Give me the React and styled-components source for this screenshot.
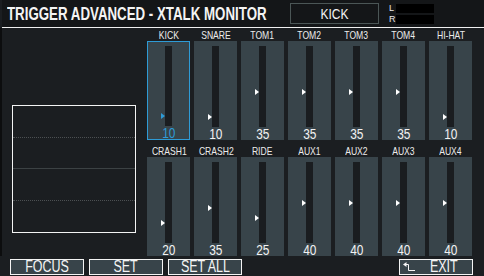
import styled, { createGlobalStyle, css } from "styled-components";

const GlobalStyle = createGlobalStyle`
	html, body {
		margin: 0;
		padding: 0;
		background: #1b1e21;
	}
	body {
		font-family: "Liberation Sans", Arial, sans-serif;
		color: #f2f2f2;
	}
`;

const pads = [
	[
		{ name: "KICK", value: 10, active: true },
		{ name: "SNARE", value: 10 },
		{ name: "TOM1", value: 35 },
		{ name: "TOM2", value: 35 },
		{ name: "TOM3", value: 35 },
		{ name: "TOM4", value: 35 },
		{ name: "HI-HAT", value: 10 },
	],
	[
		{ name: "CRASH1", value: 20 },
		{ name: "CRASH2", value: 35 },
		{ name: "RIDE", value: 25 },
		{ name: "AUX1", value: 40 },
		{ name: "AUX2", value: 40 },
		{ name: "AUX3", value: 40 },
		{ name: "AUX4", value: 40 },
	],
];

const BLUE = "#2e9bd6";

const Screen = styled.div`
	width: 484px;
	height: 276px;
	display: flex;
	flex-direction: column;
	background: #1b1e21;
	overflow: hidden;
`;

const Squeeze = styled.span`
	display: inline-block;
	white-space: nowrap;
	transform: scaleX(${(p) => p.$k || 0.78});
	transform-origin: ${(p) => p.$origin || "center"};
`;

const Header = styled.header`
	height: 27px;
	display: flex;
	align-items: center;
	background: #141618;
	border-bottom: 1px solid #f0f0f0;
	margin-left: 2px;
`;

const Title = styled.h1`
	width: 288px;
	margin: 0;
	padding-left: 5px;
	box-sizing: border-box;
	font-size: 19px;
	font-weight: bold;
	line-height: 27px;
	color: #f4f4f4;
`;

const PadName = styled.div`
	width: 89px;
	height: 21px;
	box-sizing: border-box;
	border: 1px solid #4b5656;
	display: flex;
	align-items: center;
	justify-content: center;
	font-size: 15px;
	color: #f4f4f4;
`;

const Meter = styled.div`
	margin-left: 10px;
	display: grid;
	grid-template-columns: 7px 38px;
	row-gap: 2px;
	align-items: center;
	font-size: 9px;
	line-height: 9px;
	color: #e8e8e8;
`;

const MeterBar = styled.div`
	height: 9px;
	background: #000;
`;

const Main = styled.main`
	flex: 1;
	display: flex;
	border-left: 2px solid #0c0d0e;
`;

const LeftPanel = styled.div`
	width: 145px;
	padding: 77px 0 0 10px;
	box-sizing: border-box;
`;

const Scope = styled.div`
	width: 124px;
	height: 128px;
	box-sizing: border-box;
	border: 1px solid #f4f4f4;
	display: grid;
	grid-template-rows: repeat(4, 1fr);
`;

const ScopeRow = styled.div`
	${(p) =>
		p.$line === "dot" &&
		css`
			border-bottom: 1px dotted #4c5052;
		`}
	${(p) =>
		p.$line === "solid" &&
		css`
			border-bottom: 1px solid #3c4244;
		`}
`;

const Grid = styled.div`
	display: grid;
	grid-template-columns: repeat(7, 43px);
	column-gap: 4px;
	row-gap: 4px;
	align-content: start;
`;

const Cell = styled.div`
	display: flex;
	flex-direction: column;
`;

const Label = styled.div`
	height: 13px;
	line-height: 13px;
	font-size: 11px;
	text-align: center;
	color: #ececec;
	padding-top: 1px;
	box-sizing: border-box;
`;

const Column = styled.div`
	height: 99px;
	box-sizing: border-box;
	background: #38444a;
	display: flex;
	flex-direction: column;
	align-items: center;
	padding-top: 5px;
	${(p) =>
		p.$active &&
		css`
			border: 1px solid ${BLUE};
			padding-top: 4px;
		`}
`;

const Track = styled.div`
	position: relative;
	width: 7px;
	height: 81px;
	background: #1a1d20;
`;

const Marker = styled.div`
	position: absolute;
	right: 100%;
	width: 0;
	height: 0;
	border-top: 3.5px solid transparent;
	border-bottom: 3.5px solid transparent;
	border-left: 4px solid ${(p) => (p.$active ? BLUE : "#ffffff")};
`;

const Value = styled.div`
	font-size: 14px;
	line-height: 12px;
	padding-top: 1px;
	color: ${(p) => (p.$active ? BLUE : "#f2f2f2")};
`;

const Footer = styled.footer`
	height: 20px;
	display: flex;
	align-items: flex-start;
	padding: 3px 0 0 10px;
	box-sizing: border-box;
	gap: 5px;
`;

const Button = styled.div`
	width: 74px;
	height: 16px;
	box-sizing: border-box;
	background: #38444a;
	border: 1px solid #f4f4f4;
	display: flex;
	align-items: center;
	justify-content: center;
	font-size: 16px;
	color: #f4f4f4;
	${(p) =>
		p.$push &&
		css`
			margin-left: auto;
			margin-right: 11px;
			justify-content: flex-start;
			padding-left: 3px;
			gap: 11px;
		`}
`;

function ReturnIcon() {
	return (
		<svg width="12" height="10" viewBox="0 0 12 10">
			<path d="M0 2.5 L3.5 0 L3.5 5 Z" fill="#f4f4f4" />
			<path d="M3 2.5 H5.5 V8.5 H12" fill="none" stroke="#f4f4f4" strokeWidth="1" />
		</svg>
	);
}

function PadCell({ pad }) {
	return (
		<Cell>
			<Label>
				<Squeeze $k={0.78}>{pad.name}</Squeeze>
			</Label>
			<Column $active={pad.active}>
				<Track>
					<Marker $active={pad.active} style={{ bottom: pad.value - 2.5 }} />
				</Track>
				<Value $active={pad.active}>
					<Squeeze $k={0.85}>{pad.value}</Squeeze>
				</Value>
			</Column>
		</Cell>
	);
}

export default function App() {
	return (
		<Screen>
			<GlobalStyle />
			<Header>
				<Title>
					<Squeeze $k={0.7} $origin="left">
						TRIGGER ADVANCED - XTALK MONITOR
					</Squeeze>
				</Title>
				<PadName>
					<Squeeze $k={0.8}>KICK</Squeeze>
				</PadName>
				<Meter>
					<span>L</span>
					<MeterBar />
					<span>R</span>
					<MeterBar />
				</Meter>
			</Header>
			<Main>
				<LeftPanel>
					<Scope>
						<ScopeRow $line="dot" />
						<ScopeRow $line="solid" />
						<ScopeRow $line="dot" />
						<ScopeRow />
					</Scope>
				</LeftPanel>
				<Grid>
					{pads.flat().map((pad) => (
						<PadCell key={pad.name} pad={pad} />
					))}
				</Grid>
			</Main>
			<Footer>
				<Button>
					<Squeeze>FOCUS</Squeeze>
				</Button>
				<Button>
					<Squeeze>SET</Squeeze>
				</Button>
				<Button>
					<Squeeze>SET ALL</Squeeze>
				</Button>
				<Button $push>
					<ReturnIcon />
					<Squeeze>EXIT</Squeeze>
				</Button>
			</Footer>
		</Screen>
	);
}
